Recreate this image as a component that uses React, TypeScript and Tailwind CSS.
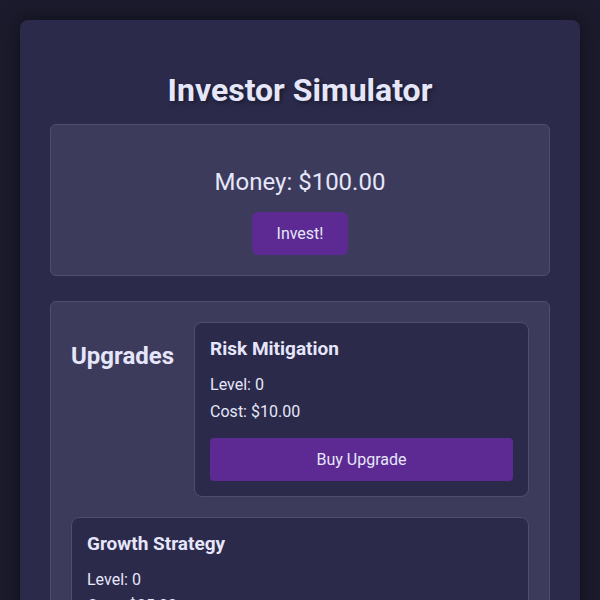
import React, { useState } from 'react';

type Upgrade = { name: string; level: number; cost: number };

const UpgradeCard: React.FC<{ u: Upgrade; onBuy: () => void }> = ({ u, onBuy }) => (
  <div className="flex-[1_1_300px] bg-[#2b2a4b] border border-[#4f4e72] rounded-lg p-[15px]">
    <h3 className="text-[19px] font-bold leading-[1.2] mb-[11px]">{u.name}</h3>
    <p className="text-base leading-[1.65]">Level: {u.level}</p>
    <p className="text-base leading-[1.65]">Cost: ${u.cost.toFixed(2)}</p>
    <button onClick={onBuy} className="mt-[13px] w-full py-3 bg-[#5c2a92] rounded text-base leading-[1.2] text-[#e6e6fa]">
      Buy Upgrade
    </button>
  </div>
);

const App: React.FC = () => {
  const [money, setMoney] = useState(100);
  const [upgrades, setUpgrades] = useState<Upgrade[]>([
    { name: 'Risk Mitigation', level: 0, cost: 10 },
    { name: 'Growth Strategy', level: 0, cost: 25 },
  ]);

  const buy = (i: number) => {
    const u = upgrades[i];
    if (money < u.cost) return;
    setMoney(money - u.cost);
    setUpgrades(upgrades.map((x, j) => (j === i ? { ...x, level: x.level + 1, cost: x.cost * 1.5 } : x)));
  };

  return (
    <div className="min-h-screen bg-[#1c1b2d] p-5 font-['Roboto',sans-serif] text-[#e6e6fa]">
      <div className="bg-[#2b2a4b] rounded-lg p-[30px] shadow-[0_0_20px_rgba(0,0,0,0.5)]">
        {/* header */}
        <h1 className="text-center text-[32px] font-bold leading-[1.2] mt-[21px] mb-[15px] [text-shadow:2px_2px_4px_rgba(0,0,0,0.4)]">
          Investor Simulator
        </h1>

        {/* money */}
        <div className="bg-[#3c3b5c] border border-[#4f4e72] rounded-md p-5 flex flex-col items-center mb-[25px]">
          <p className="text-2xl leading-[1.2] mt-[23px] mb-[15px]">Money: ${money.toFixed(2)}</p>
          <button onClick={() => setMoney(money * 1.1)} className="px-[25px] py-3 bg-[#5c2a92] rounded-md text-base leading-[1.2]">
            Invest!
          </button>
        </div>

        {/* upgrades */}
        <div className="bg-[#3c3b5c] border border-[#4f4e72] rounded-md p-5 flex flex-wrap gap-5">
          <h2 className="text-2xl font-bold leading-[1.2] my-[0.83em]">Upgrades</h2>
          {upgrades.map((u, i) => (
            <UpgradeCard key={u.name} u={u} onBuy={() => buy(i)} />
          ))}
        </div>
      </div>
    </div>
  );
};

export default App;
